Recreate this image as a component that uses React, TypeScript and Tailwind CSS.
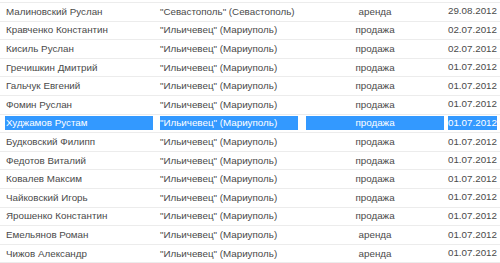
const rows = [
  ["Малиновский Руслан", "\"Севастополь\" (Севастополь)", "аренда", "29.08.2012"],
  ["Кравченко Константин", "\"Ильичевец\" (Мариуполь)", "продажа", "02.07.2012"],
  ["Кисиль Руслан", "\"Ильичевец\" (Мариуполь)", "продажа", "02.07.2012"],
  ["Гречишкин Дмитрий", "\"Ильичевец\" (Мариуполь)", "продажа", "01.07.2012"],
  ["Гальчук Евгений", "\"Ильичевец\" (Мариуполь)", "продажа", "01.07.2012"],
  ["Фомин Руслан", "\"Ильичевец\" (Мариуполь)", "продажа", "01.07.2012"],
  ["Худжамов Рустам", "\"Ильичевец\" (Мариуполь)", "продажа", "01.07.2012"],
  ["Будковский Филипп", "\"Ильичевец\" (Мариуполь)", "продажа", "01.07.2012"],
  ["Федотов Виталий", "\"Ильичевец\" (Мариуполь)", "продажа", "01.07.2012"],
  ["Ковалев Максим", "\"Ильичевец\" (Мариуполь)", "продажа", "01.07.2012"],
  ["Чайковский Игорь", "\"Ильичевец\" (Мариуполь)", "продажа", "01.07.2012"],
  ["Ярошенко Константин", "\"Ильичевец\" (Мариуполь)", "продажа", "01.07.2012"],
  ["Емельянов Роман", "\"Ильичевец\" (Мариуполь)", "аренда", "01.07.2012"],
  ["Чижов Александр", "\"Ильичевец\" (Мариуполь)", "аренда", "01.07.2012"],
];

const SELECTED = 6;

export default function App() {
  return (
    <div
      className="h-[263px] w-[500px] overflow-hidden bg-white pt-[2px] text-[9.8px] text-[#4a4a4a]"
      style={{ fontFamily: '"Liberation Sans", Arial, sans-serif' }}
    >
      <div className="border-t border-[#ececec]">
        {rows.map((r, i) => {
          const sel = i === SELECTED;
          const hl = sel ? "bg-[#3399ff] text-white" : "";
          return (
            <div
              key={i}
              className="grid h-[18.6px] grid-cols-[155px_145px_146px_1fr] items-center border-b border-[#ececec]"
            >
              <div className="pl-[5px] pr-[2px]">
                <div className={`pl-[1px] leading-[14px] ${hl}`}>{r[0]}</div>
              </div>
              <div className="pl-[5px] pr-[2px]">
                <div className={`whitespace-nowrap leading-[14px] ${hl}`}>{r[1]}</div>
              </div>
              <div className="pl-[6px] pr-[2px]">
                <div className={`text-center leading-[14px] ${hl}`}>{r[2]}</div>
              </div>
              <div className="pr-[3px] text-right">
                <span className={`inline-block leading-[14px] ${hl}`}>{r[3]}</span>
              </div>
            </div>
          );
        })}
      </div>
    </div>
  );
}
